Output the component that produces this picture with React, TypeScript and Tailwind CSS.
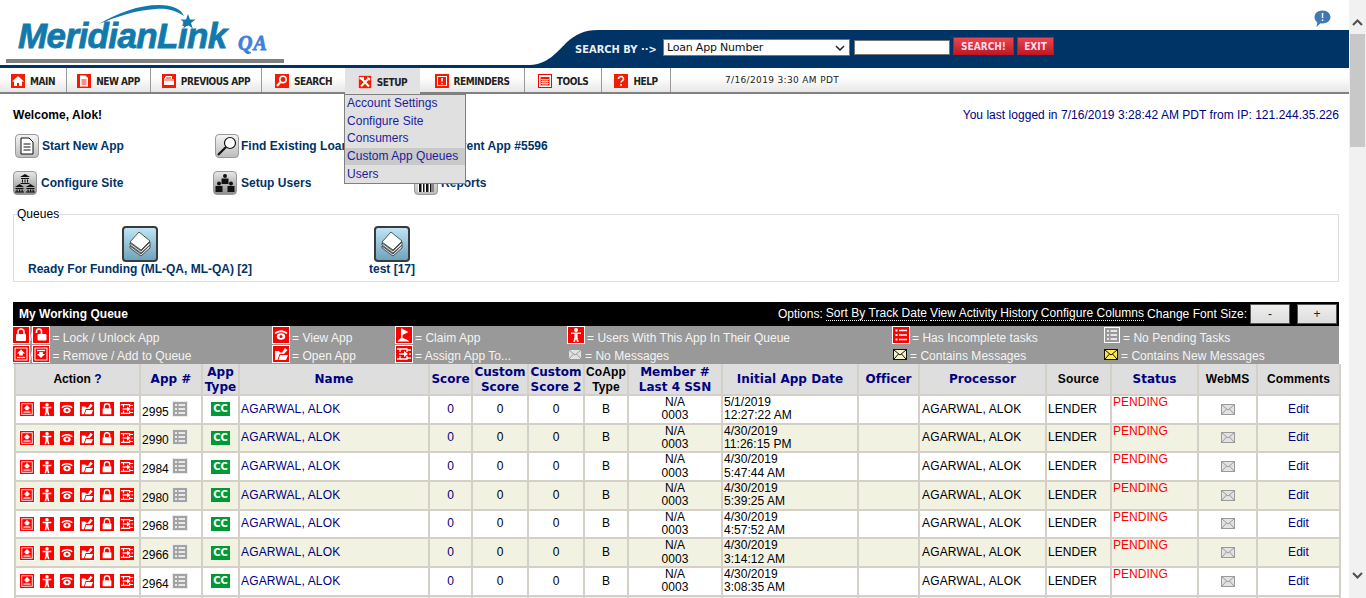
import type { ReactNode } from "react";

type RedName = "up" | "down" | "person" | "eye" | "folder" | "lock" | "unlock" | "assign" | "flag" | "list";

// little white-on-red glyphs used in the action column and the legend
function RedIcon({ name, size = 16, frame = false }: { name: RedName; size?: number; frame?: boolean }) {
  const glyphs: Record<RedName, ReactNode> = {
    up: (
      <>
        <rect x="2" y="2" width="12" height="12" fill="none" stroke="#fff" strokeWidth="1" />
        <path d="M8 3.500l4 4h-2.200v2H6.200v-2H4z" fill="#fff" />
        <path d="M4 11.500h8" stroke="#fff" strokeWidth="1.300" />
      </>
    ),
    down: (
      <>
        <rect x="2" y="2" width="12" height="12" fill="none" stroke="#fff" strokeWidth="1" />
        <path d="M4 4.500h8" stroke="#fff" strokeWidth="1.300" />
        <path d="M6.200 6h3.600v2H12l-4 4-4-4h2.200z" fill="#fff" />
      </>
    ),
    person: (
      <>
        <circle cx="8" cy="3" r="2" fill="#fff" />
        <path d="M3 5.500h10v1.600H9.600V10.500l1.200 4.500H9l-1-3.500-1 3.500H5.200l1.200-4.500V7.100H3z" fill="#fff" />
      </>
    ),
    eye: (
      <>
        <path d="M1.500 6c3.500-3.600 9.500-3.600 13 0l-1 1C10 4.600 6 4.600 2.500 7z" fill="#fff" />
        <ellipse cx="8" cy="9.500" rx="4.200" ry="3.300" fill="#fff" />
        <circle cx="8" cy="9.500" r="1.500" fill="#f00" />
      </>
    ),
    folder: (
      <>
        <path d="M2 5h4l1 1.500h2L12 2l2.500 2-3.500 4H6.500L4.500 14H2z" fill="#fff" />
        <path d="M5.500 14l1.600-5H15l-2 5z" fill="#fff" />
      </>
    ),
    lock: (
      <>
        <path d="M5 7.500V5a3 3 0 016 0v2.500" fill="none" stroke="#fff" strokeWidth="1.500" />
        <rect x="3" y="7" width="10" height="7" rx="1" fill="#fff" />
      </>
    ),
    unlock: (
      <>
        <path d="M3.500 6V4.500a2.500 2.500 0 015 0V7" fill="none" stroke="#fff" strokeWidth="1.500" />
        <rect x="4.500" y="7" width="9" height="6.500" rx="1" fill="#fff" />
      </>
    ),
    assign: (
      <>
        <path d="M1 3h10v3 M1 13h10v-3 M4 3v3 M4 13v-3 M11 4h4 M11 12h4 M13 8h2" fill="none" stroke="#fff" strokeWidth="1.300" />
        <path d="M3 8h6" stroke="#fff" strokeWidth="1.500" />
        <path d="M8 5l4 3-4 3z" fill="#fff" />
      </>
    ),
    flag: <path d="M5 1.500h1.500V11c2 .5 5 1.500 7 3.500H1.500C2.500 13 4 11.500 5 11z M6.500 2l6 3-6 3z" fill="#fff" />,
    list: (
      <>
        <path d="M2.500 2.500h2v2h-2z M2.500 7h2v2h-2z M2.500 11.500h2v2h-2z" fill="#fff" />
        <path d="M6 3.500H14 M6 8H14 M6 12.500H14" stroke="#fff" strokeWidth="1.500" />
      </>
    ),
  };
  return (
    <svg
      width={size}
      height={size}
      viewBox="0 0 16 16"
      className={`block shrink-0 bg-[#f00] ${frame ? "outline outline-1 outline-white" : ""}`}
    >
      {glyphs[name]}
    </svg>
  );
}

function TaskIcon({ light = false }: { light?: boolean }) {
  return (
    <svg width="16" height="16" viewBox="0 0 16 16" className="block shrink-0">
      <rect
        x="0.500"
        y="0.500"
        width="15"
        height="15"
        fill={light ? "none" : "#a3a3a3"}
        stroke={light ? "#fff" : "#ececec"}
      />
      <path d="M3 4h2 M3 8h2 M3 12h2 M6.500 4H13 M6.500 8H13 M6.500 12H13" stroke="#fff" strokeWidth="1.600" />
    </svg>
  );
}

function Envelope({ fill = "#e2e2e2", stroke = "#9a9a9a" }: { fill?: string; stroke?: string }) {
  return (
    <svg width="14" height="11" viewBox="0 0 14 11" className="block shrink-0">
      <rect x="0.500" y="0.500" width="13" height="10" fill={fill} stroke={stroke} />
      <path d="M1 1l6 5 6-5 M1 10l4.500-5 M13 10L8.500 5" fill="none" stroke={stroke} />
    </svg>
  );
}

function GlossyBox({ children, className = "" }: { children: ReactNode; className?: string }) {
  return (
    <div
      className={`flex h-6 w-6 shrink-0 items-center justify-center rounded-[4px] border border-[#999] bg-gradient-to-b ${className || "from-[#f4f4f4] to-[#bdbdbd]"}`}
    >
      {children}
    </div>
  );
}

function NavIcon({ children, outline = false }: { children: ReactNode; outline?: boolean }) {
  return (
    <svg
      width="14"
      height="14"
      viewBox="0 0 14 14"
      className={`block shrink-0 ${outline ? "bg-white outline outline-1 -outline-offset-1 outline-[#f00]" : "bg-[#f41c00]"}`}
    >
      {children}
    </svg>
  );
}

const navItems: { label: string; width: string; icon: ReactNode; active?: boolean }[] = [
  {
    label: "MAIN",
    width: "w-[67px]",
    icon: (
      <NavIcon>
        <path d="M7 2L1 7.500h2V12h3V9h2v3h3V7.500h2z" fill="#fff" />
      </NavIcon>
    ),
  },
  {
    label: "NEW APP",
    width: "w-[84px]",
    icon: (
      <NavIcon>
        <path d="M3 1.500h5.500L11 4v8.500H3z" fill="#fff" />
        <path d="M4.500 6h5 M4.500 8h5 M4.500 10h5" stroke="#f41c00" />
      </NavIcon>
    ),
  },
  {
    label: "PREVIOUS APP",
    width: "w-[111px]",
    icon: (
      <NavIcon>
        <path d="M2 5l2-3h6v3h2v6H2z" fill="#fff" />
        <path d="M4 4h5" stroke="#f41c00" />
        <path d="M1 12V6h12" fill="none" stroke="#f41c00" strokeWidth="0.800" />
      </NavIcon>
    ),
  },
  {
    label: "SEARCH",
    width: "w-[83px]",
    icon: (
      <NavIcon>
        <circle cx="8" cy="5.500" r="3.200" fill="none" stroke="#fff" strokeWidth="1.500" />
        <path d="M5.500 8L2 12" stroke="#fff" strokeWidth="2" />
      </NavIcon>
    ),
  },
  {
    label: "SETUP",
    width: "w-[75px]",
    active: true,
    icon: (
      <NavIcon>
        <rect width="14" height="14" fill="#fff" />
        <rect x="0.700" y="0.700" width="12.600" height="12.600" fill="#f41c00" />
        <path d="M3.500 3.500l7.500 8 M10.500 3.500L3 11.500" stroke="#fff" strokeWidth="2" />
        <path d="M1.500 2h4.500v2.500H1.500z M9 1.500l3.500 2-1.500 2.500z" fill="#fff" />
      </NavIcon>
    ),
  },
  {
    label: "REMINDERS",
    width: "w-[105px]",
    icon: (
      <NavIcon>
        <rect x="2.500" y="2.500" width="9" height="9" fill="none" stroke="#fff" />
        <path d="M7 4v3.500 M7 9v1.200" stroke="#fff" strokeWidth="1.500" />
      </NavIcon>
    ),
  },
  {
    label: "TOOLS",
    width: "w-[77px]",
    icon: (
      <NavIcon outline>
        <path d="M2.500 3h9v8.500h-9z" fill="#f41c00" />
        <path d="M3 5.500h8 M3 7.500h8 M3 9.500h8 M5 5v6 M7 5v6 M9 5v6" stroke="#fff" strokeWidth="0.700" />
      </NavIcon>
    ),
  },
  {
    label: "HELP",
    width: "w-[69px]",
    icon: (
      <NavIcon>
        <path d="M4.500 5a2.500 2.500 0 115 0c0 1.500-2.500 2-2.500 3.500" fill="none" stroke="#fff" strokeWidth="1.600" />
        <path d="M7 10v1.800" stroke="#fff" strokeWidth="1.600" />
      </NavIcon>
    ),
  },
];

const rows = [
  { id: "2995", day: "5/1/2019", time: "12:27:22 AM" },
  { id: "2990", day: "4/30/2019", time: "11:26:15 PM" },
  { id: "2984", day: "4/30/2019", time: "5:47:44 AM" },
  { id: "2980", day: "4/30/2019", time: "5:39:25 AM" },
  { id: "2968", day: "4/30/2019", time: "4:57:52 AM" },
  { id: "2966", day: "4/30/2019", time: "3:14:12 AM" },
  { id: "2964", day: "4/30/2019", time: "3:08:35 AM" },
  { id: "2962", day: "4/30/2019", time: "2:51:09 AM" },
];

const columns: { label: ReactNode; width: string; plain?: boolean }[] = [
  { label: <span className="font-['Liberation_Sans'] text-black">Action <span className="text-[#000080]">?</span></span>, width: "w-[125px]" },
  { label: "App #", width: "w-[62px]" },
  { label: <>App<br />Type</>, width: "w-[37px]" },
  { label: "Name", width: "w-[190px]" },
  { label: "Score", width: "w-[43px]" },
  { label: <>Custom<br />Score</>, width: "w-[56px]" },
  { label: <>Custom<br />Score 2</>, width: "w-[56px]" },
  { label: <>CoApp<br />Type</>, width: "w-[44px]", plain: true },
  { label: <>Member #<br />Last 4 SSN</>, width: "w-[94px]" },
  { label: "Initial App Date", width: "w-[136px]" },
  { label: "Officer", width: "w-[61px]" },
  { label: "Processor", width: "w-[127px]" },
  { label: "Source", width: "w-[65px]", plain: true },
  { label: "Status", width: "w-[87px]" },
  { label: "WebMS", width: "w-[59px]", plain: true },
  { label: "Comments", width: "w-[83px]", plain: true },
];

const cell = "border-2 border-[#d4d0c8] p-0 text-center align-middle";

function QuickLink({ icon, label, className = "" }: { icon: ReactNode; label: string; className?: string }) {
  return (
    <div className={`flex items-center gap-[3px] text-[12px] font-bold text-[#003366] ${className}`}>
      {icon}
      <span>{label}</span>
    </div>
  );
}

function Legend({ icon, label, top = false }: { icon: ReactNode; label: string; top?: boolean }) {
  return (
    <div className="flex h-[18px] items-center gap-[3px] whitespace-nowrap">
      {icon}
      <span className={top ? "pt-[5px]" : "pt-[3px]"}>{label}</span>
    </div>
  );
}

function QueueIcon() {
  return (
    <div className="flex h-[36px] w-[36px] items-center justify-center rounded-[4px] border-2 border-[#3a3a3a] bg-gradient-to-b from-[#bfe4f5] to-[#6fa3bd]">
      <svg width="28" height="28" viewBox="0 0 28 28">
        <path d="M4 16l11 8 9-9v3l-9 8-11-8z" fill="#ddd" stroke="#333" strokeWidth="0.800" />
        <path d="M4 13l11 8 9-9v3l-9 8-11-8z" fill="#eee" stroke="#333" strokeWidth="0.800" />
        <path d="M4 12l9-10 11 9-9 9z" fill="#fff" stroke="#333" strokeWidth="0.800" />
      </svg>
    </div>
  );
}

export default function App() {
  return (
    <div className="flex h-[598px] w-[1366px] overflow-hidden bg-white font-['Liberation_Sans',Arial,sans-serif] text-[12px] tracking-[0.03px] text-black">
      <div className="relative min-w-0 flex-1">
        {/* logo + search band */}
        <header className="flex h-[65px] items-stretch">
          <div className="w-[530px] shrink-0 pl-[6px]">
            <div className="relative h-[59px] w-[278px]">
              <svg width="230" height="34" viewBox="0 0 230 34" className="absolute top-[0px] left-[0px]">
                <path d="M93 24c18-11 40-19 60-19 14 0 22 4 25 11-9-6-18-8-28-7-20 1-40 8-57 15z" fill="#1279ad" />
                <path d="M182 14l2 5.500h5.500l-4.500 3.400 1.800 5.600-4.800-3.400-4.800 3.400 1.800-5.600-4.500-3.400h5.500z" fill="#1279ad" />
              </svg>
              <span className="absolute top-[15px] left-[12px] text-[35px] leading-[42px] font-bold tracking-[-0.6px] text-[#1279ad] italic [-webkit-text-stroke:0.8px_#1279ad]">
                MeridianLink
              </span>
              <span className="absolute top-[32px] left-[232px] font-['Liberation_Serif'] text-[20px] leading-[22px] font-bold tracking-[1px] text-[#3f7fdd] italic [-webkit-text-stroke:0.8px_#3f7fdd]">
                QA
              </span>
            </div>
            <div className="h-[4px] w-[278px] bg-[#7f7f7f]" />
          </div>
          <div className="flex min-w-0 flex-1 items-end">
            <svg width="68" height="35" viewBox="0 0 68 35" className="block shrink-0">
              <path d="M0 35c18-1 26-12 36-22C46 4 54 0 68 0v35z" fill="#003366" />
            </svg>
            <div className="flex h-[35px] flex-1 items-start bg-[#003366]">
              <span className="mt-[13px] ml-[-23px] w-[88px] font-['DejaVu_Sans_Condensed','DejaVu_Sans'] text-[11px] leading-[14px] font-bold whitespace-nowrap text-[#e8eef4]">
                SEARCH BY ··&gt;
              </span>
              <div className="mt-[9px] flex h-[17px] w-[187px] items-center justify-between border border-[#777] bg-white pr-[4px] pl-[3px] font-['DejaVu_Sans'] text-[11px] tracking-[-0.2px] text-[#111]">
                <span className="pt-[2px]">Loan App Number</span>
                <svg width="10" height="6" viewBox="0 0 10 6">
                  <path d="M1 1l4 4 4-4" fill="none" stroke="#222" strokeWidth="1.500" />
                </svg>
              </div>
              <div className="mt-[10px] ml-[4px] h-[15px] w-[96px] border border-[#777] bg-white" />
              <div className="mt-[7px] ml-[3px] flex h-[18px] w-[61px] items-center justify-center border border-[#d01020] bg-gradient-to-b from-[#f0434e] to-[#b81c26] font-['DejaVu_Sans_Condensed','DejaVu_Sans'] text-[10px] font-bold text-[#fde]">
                SEARCH!
              </div>
              <div className="mt-[7px] ml-[3px] flex h-[18px] w-[37px] items-center justify-center border border-[#d01020] bg-gradient-to-b from-[#f0434e] to-[#b81c26] font-['DejaVu_Sans_Condensed','DejaVu_Sans'] text-[10px] font-bold text-[#fde]">
                EXIT
              </div>
            </div>
          </div>
        </header>

        {/* nav */}
        <nav className="flex h-[29px] border-t-[3px] border-b-2 border-t-[#003366] border-b-[#808080] bg-gradient-to-b from-white from-40% to-[#e6e6e6] font-['DejaVu_Sans_Condensed','DejaVu_Sans'] text-[10px] font-bold tracking-[-0.45px] text-[#222]">
          {navItems.map((item) => (
            <div
              key={item.label}
              className={`flex items-center justify-center gap-[5px] pt-[2px] ${item.width} ${
                item.active ? "mb-[-2px] bg-[#e2e1e3]" : item.label === "SEARCH" ? "" : "border-r border-[#999]"
              }`}
            >
              {item.icon}
              <span>{item.label}</span>
            </div>
          ))}
          <span className="ml-[54px] self-center pt-[2px] font-['DejaVu_Sans'] text-[9px] font-normal tracking-[0.35px] text-[#222]">
            7/16/2019 3:30 AM PDT
          </span>
        </nav>

        {/* setup dropdown */}
        <div className="absolute top-[94px] left-[344px] z-10 flex h-[90px] w-[122px] flex-col border border-[#808080] bg-[#e0e0e0] text-[#1c1c9c]">
          {["Account Settings", "Configure Site", "Consumers", "Custom App Queues", "Users"].map((label) => (
            <div
              key={label}
              className={`h-[17.800px] pl-[2px] leading-[17px] ${label === "Custom App Queues" ? "bg-[#c9c9c9]" : ""} ${label === "Users" ? "pt-[1px]" : ""}`}
            >
              {label}
            </div>
          ))}
        </div>

        <main className="px-[13px] pt-[14px] pr-[10px]">
          <div className="flex justify-between leading-[14px]">
            <b>Welcome, Alok!</b>
            <span className="text-[#000080]">You last logged in 7/16/2019 3:28:42 AM PDT from IP: 121.244.35.226</span>
          </div>

          <div className="mt-[11px] grid h-[63px] grid-cols-[200px_200px_1fr] grid-rows-[26px_26px] gap-y-[11px]">
            <QuickLink
              className="pl-[2px]"
              label="Start New App"
              icon={
                <GlossyBox>
                  <svg width="16" height="18" viewBox="0 0 16 18">
                    <path d="M2 1h8l4 4v12H2z M4.500 7h7 M4.500 10h7 M4.500 13h7" fill="#fff" stroke="#111" />
                  </svg>
                </GlossyBox>
              }
            />
            <QuickLink
              className="!gap-[2px] pl-[2px]"
              label="Find Existing Loan"
              icon={
                <GlossyBox>
                  <svg width="22" height="22" viewBox="0 0 22 22">
                    <circle cx="14" cy="8" r="5.500" fill="#fff" stroke="#111" strokeWidth="1.200" />
                    <path d="M10 12l-8 8" stroke="#111" strokeWidth="2.200" />
                  </svg>
                </GlossyBox>
              }
            />
            <QuickLink className="pl-[25px]" label="Current App #5596" icon={<span />} />
            <QuickLink
              className="!gap-[4px]"
              label="Configure Site"
              icon={
                <GlossyBox className="from-[#e8e8e8] to-[#8f8f8f]">
                  <svg width="22" height="20" viewBox="0 0 22 20">
                    <path d="M11 1l5 3H6z M7 5h8v1H7z M8 6.500h1v3H8z M10.500 6.500h1v3h-1z M13 6.500h1v3h-1z M6.500 10h9v1h-9z" fill="#111" />
                    <path d="M5.500 11l4.500 3H1z M1.500 15h8v1h-8z M2.500 16.500h1.200v2H2.500z M5 16.500h1.200v2H5z M7.500 16.500h1.200v2H7.500z M1 18.500h9v1H1z" fill="#111" />
                    <path d="M16.500 11l4.500 3H12z M12.500 15h8v1h-8z M13.500 16.500h1.200v2h-1.200z M16 16.500h1.200v2H16z M18.500 16.500h1.200v2h-1.200z M12 18.500h9v1h-9z" fill="#111" />
                  </svg>
                </GlossyBox>
              }
            />
            <QuickLink
              className="!gap-[4px]"
              label="Setup Users"
              icon={
                <GlossyBox className="from-[#e8e8e8] to-[#8f8f8f]">
                  <svg width="22" height="20" viewBox="0 0 22 20">
                    <path d="M11 1a2 2 0 110 4 2 2 0 010-4z M7.500 5.500h7V11h-7z M5 8.500a2 2 0 110 4 2 2 0 010-4z M1.500 13h7v6h-7z M17 8.500a2 2 0 110 4 2 2 0 010-4z M13.500 13h7v6h-7z" fill="#111" />
                  </svg>
                </GlossyBox>
              }
            />
            <QuickLink
              className="pl-[1px]"
              label="Reports"
              icon={
                <GlossyBox>
                  <svg width="18" height="20" viewBox="0 0 18 20">
                    <path d="M1 1h16v18H1z" fill="#fff" />
                    <path d="M2 4h2.500v15H2z M6 4h1.500v15H6z M9 4h2.500v15H9z M13 4h1.500v15H13z M15.500 4h1v15h-1z" fill="#111" />
                  </svg>
                </GlossyBox>
              }
            />
          </div>

          {/* queues fieldset */}
          <fieldset className="mt-[11px] h-[75px] border border-[#dddddd]">
            <legend className="ml-[3px] pr-[1px] text-[12px] leading-[14px]">Queues</legend>
            <div className="flex leading-[14px] font-bold tracking-normal text-[#003366]">
              <div className="flex w-[252px] flex-col items-center pt-[5px]">
                <QueueIcon />
                <span>Ready For Funding (ML-QA, ML-QA) [2]</span>
              </div>
              <div className="flex flex-col items-center pt-[5px] pl-[103px]">
                <QueueIcon />
                <span>test [17]</span>
              </div>
            </div>
          </fieldset>

          {/* working queue */}
          <div className="mt-[20px] flex h-[24px] items-center justify-between bg-black pr-[2px] pl-[6px] text-white">
            <b>My Working Queue</b>
            <div className="flex items-center gap-[3px]">
              <span>Options:</span>
              <span className="border-b border-dotted border-white leading-[13px]">Sort By Track Date</span>
              <span className="border-b border-dotted border-white leading-[13px]">View Activity History</span>
              <span className="border-b border-dotted border-white leading-[13px]">Configure Columns</span>
              <span>Change Font Size:</span>
              <div className="flex h-[20px] w-[40px] items-center justify-center border border-[#555] bg-gradient-to-b from-[#eee] to-[#ddd] text-[#222]">-</div>
              <div className="ml-[4px] flex h-[20px] w-[40px] items-center justify-center border border-[#555] bg-gradient-to-b from-[#eee] to-[#ddd] text-[#222]">+</div>
            </div>
          </div>

          <div className="grid h-[38px] grid-cols-[260px_123px_172px_325px_211px_1fr] grid-rows-[19px_19px] bg-[#999] text-[#f4f4f4]">
            <Legend
              top
              label="= Lock / Unlock App"
              icon={
                <span className="flex items-end gap-[0.5px] leading-[12px]">
                  <RedIcon name="lock" frame />
                  <span>/</span>
                  <RedIcon name="unlock" frame />
                </span>
              }
            />
            <Legend top label="= View App" icon={<RedIcon name="eye" frame />} />
            <Legend top label="= Claim App" icon={<RedIcon name="flag" frame />} />
            <Legend top label="= Users With This App In Their Queue" icon={<RedIcon name="person" frame />} />
            <Legend top label="= Has Incomplete tasks" icon={<RedIcon name="list" frame />} />
            <Legend top label="= No Pending Tasks" icon={<TaskIcon light />} />
            <Legend
              label="= Remove / Add to Queue"
              icon={
                <span className="flex items-end gap-[0.5px] leading-[12px]">
                  <RedIcon name="up" frame />
                  <span>/</span>
                  <RedIcon name="down" frame />
                </span>
              }
            />
            <Legend label="= Open App" icon={<RedIcon name="folder" frame />} />
            <Legend label="= Assign App To..." icon={<RedIcon name="assign" frame />} />
            <Legend label="= No Messages" icon={<Envelope />} />
            <Legend label="= Contains Messages" icon={<Envelope fill="#f4f0c8" stroke="#111" />} />
            <Legend label="= Contains New Messages" icon={<Envelope fill="#ffe94d" stroke="#111" />} />
          </div>

          <table className="ml-[1px] w-[1325px] table-fixed border-collapse">
            <colgroup>
              {columns.map((col, i) => (
                <col key={i} className={col.width} />
              ))}
            </colgroup>
            <thead>
              <tr className="h-[30px] bg-[#dedede] font-['DejaVu_Sans'] text-[12px] leading-[14.500px] font-bold text-[#000080]">
                {columns.map((col, i) => (
                  <th key={i} className={`${cell} border-t-0 pt-[1px] ${col.plain ? "font-['Liberation_Sans'] tracking-[0.1px] text-black" : ""}`}>
                    {col.label}
                  </th>
                ))}
              </tr>
            </thead>
            <tbody>
              {rows.map((row, i) => (
                <tr key={row.id} className={`h-[28.670px] leading-[13.330px] ${i % 2 ? "bg-[#f2f2e2]" : "bg-white"}`}>
                  <td className={cell}>
                    <div className="flex gap-[6px] pl-[4px]">
                      <RedIcon name="up" size={14} frame />
                      <RedIcon name="person" size={14} />
                      <RedIcon name="eye" size={14} />
                      <RedIcon name="folder" size={14} frame />
                      <RedIcon name="lock" size={14} />
                      <RedIcon name="assign" size={14} />
                    </div>
                  </td>
                  <td className={`${cell} text-left`}>
                    <div className="flex h-[19px] items-start gap-[3px] pl-[1px]">
                      <span className="pt-[5px] leading-[14px]">{row.id}</span>
                      <span className="mt-[1px]">
                        <TaskIcon />
                      </span>
                    </div>
                  </td>
                  <td className={cell}>
                    <span className="inline-flex h-[14px] w-[19px] items-center justify-center bg-[#009933] font-['DejaVu_Sans'] text-[10px] leading-none font-bold text-white">
                      CC
                    </span>
                  </td>
                  <td className={`${cell} pl-[1px] text-left tracking-[0.15px] text-[#000080]`}>AGARWAL, ALOK</td>
                  <td className={`${cell} text-[#000080]`}>0</td>
                  <td className={cell}>0</td>
                  <td className={cell}>0</td>
                  <td className={cell}>B</td>
                  <td className={cell}>
                    N/A
                    <br />
                    0003
                  </td>
                  <td className={`${cell} pl-[1px] text-left`}>
                    {row.day}
                    <br />
                    {row.time}
                  </td>
                  <td className={cell} />
                  <td className={`${cell} pl-[2px] text-left tracking-[0.15px]`}>AGARWAL, ALOK</td>
                  <td className={`${cell} pl-[1px] text-left`}>LENDER</td>
                  <td className={`${cell} pl-[1px] text-left align-top text-[#f00]`}>PENDING</td>
                  <td className={cell}>
                    <div className="flex justify-center">
                      <Envelope />
                    </div>
                  </td>
                  <td className={`${cell} text-[#000080]`}>Edit</td>
                </tr>
              ))}
            </tbody>
          </table>
        </main>

        {/* notification bubble */}
        <svg width="17" height="18" viewBox="0 0 17 18" className="absolute top-[10px] left-[1314px]">
          <path d="M8.500 .5c4.400 0 8 2.800 8 6.500s-3.600 6.500-8 6.500c-.7 0-1.400 0-2-.2L2.500 17l.8-4.800C1.500 11 .5 9.100.5 7 .5 3.300 4.100.5 8.500.5z" fill="#3f78b5" />
          <path d="M8.500 3v5 M8.500 9.500v1.500" stroke="#fff" strokeWidth="1.500" />
        </svg>
      </div>

      {/* scrollbar */}
      <div className="flex w-[17px] shrink-0 flex-col items-center bg-[#f1f1f1]">
        <svg width="11" height="7" viewBox="0 0 11 7" className="mt-[19px]">
          <path d="M1 6l4.500-4.500L10 6" fill="none" stroke="#505050" strokeWidth="2" />
        </svg>
        <div className="mt-[8px] h-[113px] w-[15px] bg-[#c8c8c8]" />
        <svg width="11" height="7" viewBox="0 0 11 7" className="mt-[425px]">
          <path d="M1 1l4.500 4.500L10 1" fill="none" stroke="#505050" strokeWidth="2" />
        </svg>
      </div>
    </div>
  );
}
